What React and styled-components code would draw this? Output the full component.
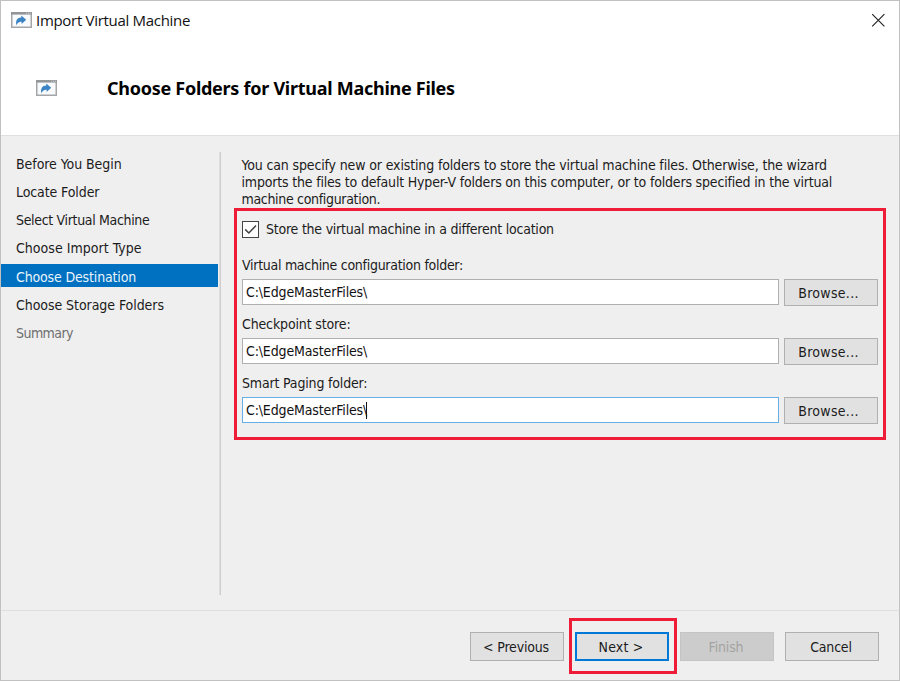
import React from "react";
import styled, { createGlobalStyle, css } from "styled-components";

const GlobalStyle = createGlobalStyle`
  *, *::before, *::after { box-sizing: border-box; }
  body { margin: 0; }
`;

const Dialog = styled.div`
  width: 900px;
  height: 681px;
  display: flex;
  flex-direction: column;
  border: 1px solid #c1c1c1;
  background: #efefef;
  color: #1c1c1c;
  font-family: "DejaVu Sans Condensed", "DejaVu Sans", sans-serif;
  font-stretch: condensed;
  font-size: 14px;
  line-height: 17px;
  white-space: pre;
`;

const Label = styled.span`
  display: block;
  letter-spacing: ${(p) => p.$tracking || 0}px;
`;

const Header = styled.header`
  height: 135px;
  flex: none;
  background: #fff;
  border-bottom: 1px solid #e0e0e0;
  font-stretch: normal;
`;

const TitleBar = styled.div`
  height: 38px;
  display: flex;
  align-items: center;
  padding: 0 13px 0 10px;
`;

const WindowTitle = styled(Label)`
  flex: 1;
  margin-left: 4px;
  font-family: "Open Sans", sans-serif;
  font-size: 15px;
  line-height: 20px;
  color: #111;
`;

const CloseButton = styled.button`
  width: 15px;
  height: 15px;
  padding: 0;
  border: 0;
  background: none;
  display: flex;
`;

const Banner = styled.div`
  display: flex;
  align-items: center;
  height: 30px;
  margin-top: 34px;
  padding-left: 35px;
`;

const Heading = styled.h1`
  margin: 0 0 0 50px;
  font-family: "Noto Sans", sans-serif;
  font-size: 18px;
  line-height: 24px;
  letter-spacing: -0.27px;
  color: #000;
`;

const Body = styled.div`
  height: 475px;
  flex: none;
  display: flex;
  border-bottom: 1px solid #dfdfdf;
`;

const Steps = styled.nav`
  width: 217px;
  padding-top: 15.6px;
  display: flex;
  flex-direction: column;
  gap: 5.17px;
`;

const Step = styled.div`
  height: 23px;
  padding: 4.3px 0 0 15px;
  color: ${(p) => (p.$state === "active" ? "#e9f4fc" : p.$state === "disabled" ? "#6e6e6e" : "#1c1c1c")};
  background: ${(p) => (p.$state === "active" ? "#0070c0" : "transparent")};
`;

const Divider = styled.div`
  width: 2px;
  height: 443px;
  margin: 16px 0 0 1px;
  background: linear-gradient(90deg, #dedede 50%, #cecece 50%);
`;

const Content = styled.main`
  width: 665px;
  margin-left: 13px;
  padding-top: 21px;
`;

const Intro = styled.div`
  padding-left: 7.5px;
  height: 51px;
  line-height: 16.8px;
`;

const Highlight = styled.div`
  border: 3px solid #ee1c37;
`;

const FolderPanel = styled(Highlight)`
  width: 652px;
  height: 232px;
  padding: 9px 5px 0;
`;

const CheckRow = styled.div`
  display: flex;
  align-items: center;
  gap: 7px;
  height: 18px;
`;

const CheckMark = styled.span`
  width: 17px;
  height: 17px;
  display: flex;
  border: 1px solid #444;
  background: #fff;
`;

const Field = styled.div`
  height: 59px;
`;

const Fields = styled.div`
  padding-top: 19px;
`;

const FieldLabel = styled(Label)`
  height: 22px;
`;

const FieldRow = styled.div`
  display: flex;
  gap: 5px;
`;

const TextBox = styled.div`
  width: 537px;
  height: 26px;
  padding: 4px 0 0 3px;
  display: flex;
  background: #fff;
  border: 1px solid ${(p) => (p.$focused ? "#66aee6" : "#b0b0b0")};
  color: #111;
`;

const Caret = styled.span`
  width: 1px;
  height: 17px;
  margin-left: -1px;
  background: #111;
`;

const buttonTones = {
  normal: css`
    border: 1px solid #b0b0b0;
    background: #e1e1e1;
    color: #1c1c1c;
  `,
  primary: css`
    border: 2px solid #0078d7;
    background: #e1e1e1;
    color: #1c1c1c;
  `,
  disabled: css`
    border: 1px solid #c4c4c4;
    background: #cccccc;
    color: #a3a3a3;
  `,
};

const Button = styled.button`
  width: 94px;
  height: 29px;
  padding: 1px 2px 0 0;
  display: flex;
  align-items: center;
  justify-content: center;
  font: inherit;
  ${(p) => buttonTones[p.$tone || "normal"]}
`;

const BrowseButton = styled(Button)`
  height: 27px;
  padding-right: 5px;
`;

const Footer = styled.footer`
  flex: 1;
  display: flex;
  justify-content: flex-end;
  align-items: flex-start;
  padding: 7px 20px 0 0;
`;

const NextFrame = styled(Highlight)`
  width: 108px;
  height: 56px;
  margin: 0 3px 0 5px;
  padding: 11px 3px;
`;

const FooterButton = styled(Button)`
  margin: 14px ${(p) => p.$gap || 0}px 0 0;
`;

const ImportIcon = () => (
  <svg width="21" height="16" viewBox="0 0 21 16">
    <rect x="0.75" y="0.75" width="19.5" height="14.5" fill="#f9fafb" stroke="#a3a6a8" strokeWidth="1.5" />
    <rect x="0" y="0" width="21" height="2.6" fill="#929698" />
    <path d="M15.2 1.2h1M17 1.2h1M18.8 1.2h1" stroke="#dfe1e2" strokeWidth="0.9" />
    <path d="M5.4 13.2C4.2 8.6 6.6 5.5 10.3 5.6V3.4L15.2 7.8 10.6 12.1V9.7C8 9.5 6.4 10.8 5.4 13.2Z" fill="#3b84c4" />
  </svg>
);

const CloseIcon = () => (
  <svg width="15" height="15" viewBox="0 0 15 15">
    <path d="M1.2 1.2 13.4 13.4M13.4 1.2 1.2 13.4" stroke="#222" strokeWidth="1.15" />
  </svg>
);

const steps = [
  { text: "Before You Begin", tracking: -0.06 },
  { text: "Locate Folder", tracking: -0.1 },
  { text: "Select Virtual Machine", tracking: -0.33 },
  { text: "Choose Import Type", tracking: 0.03 },
  { text: "Choose Destination", tracking: -0.15 },
  { text: "Choose Storage Folders", tracking: -0.06 },
  { text: "Summary", tracking: -0.55 },
];

const states = { 4: "active", 6: "disabled" };

const fields = [
  { label: "Virtual machine configuration folder:", tracking: -0.28 },
  { label: "Checkpoint store:", tracking: -0.14 },
  { label: "Smart Paging folder:", tracking: -0.17, focused: true },
];

export default function App() {
  return (
    <>
      <GlobalStyle />
      <Dialog>
        <Header>
          <TitleBar>
            <ImportIcon />
            <WindowTitle $tracking={-0.3}>Import Virtual Machine</WindowTitle>
            <CloseButton aria-label="Close"><CloseIcon /></CloseButton>
          </TitleBar>
          <Banner>
            <ImportIcon />
            <Heading>Choose Folders for Virtual Machine Files</Heading>
          </Banner>
        </Header>
        <Body>
          <Steps>
            {steps.map((s, i) => (
              <Step key={s.text} $state={states[i]}>
                <Label $tracking={s.tracking}>{s.text}</Label>
              </Step>
            ))}
          </Steps>
          <Divider />
          <Content>
            <Intro>
              <Label $tracking={-0.14}>You can specify new or existing folders to store the virtual machine files. Otherwise, the wizard</Label>
              <Label $tracking={-0.18}>imports the files to default Hyper-V folders on this computer, or to folders specified in the virtual</Label>
              <Label $tracking={-0.32}>machine configuration.</Label>
            </Intro>
            <FolderPanel>
              <CheckRow>
                <CheckMark>
                  <svg width="15" height="15" viewBox="0 0 15 15">
                    <path d="M2.2 7.4 5.8 11 13 3.6" fill="none" stroke="#444" strokeWidth="1.5" />
                  </svg>
                </CheckMark>
                <Label $tracking={-0.23}>Store the virtual machine in a different location</Label>
              </CheckRow>
              <Fields>
                {fields.map((f) => (
                  <Field key={f.label}>
                    <FieldLabel $tracking={f.tracking}>{f.label}</FieldLabel>
                    <FieldRow>
                      <TextBox $focused={f.focused}>
                        <Label $tracking={-0.14}>{"C:\\EdgeMasterFiles\\"}</Label>
                        {f.focused && <Caret />}
                      </TextBox>
                      <BrowseButton><Label $tracking={0.3}>Browse...</Label></BrowseButton>
                    </FieldRow>
                  </Field>
                ))}
              </Fields>
            </FolderPanel>
          </Content>
        </Body>
        <Footer>
          <FooterButton><Label $tracking={-0.17}>{"< Previous"}</Label></FooterButton>
          <NextFrame>
            <Button $tone="primary"><Label $tracking={0.15}>{"Next >"}</Label></Button>
          </NextFrame>
          <FooterButton $tone="disabled" $gap={11} disabled><Label $tracking={-0.15}>Finish</Label></FooterButton>
          <FooterButton><Label $tracking={-0.2}>Cancel</Label></FooterButton>
        </Footer>
      </Dialog>
    </>
  );
}
